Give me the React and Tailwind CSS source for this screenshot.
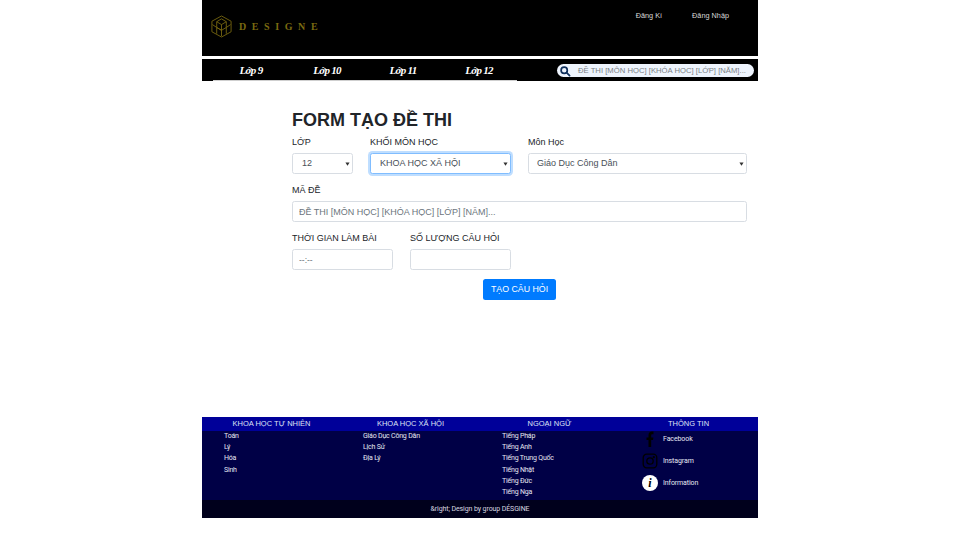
import React from "react";

const sans = "font-['Liberation_Sans',Arial,sans-serif]";
const foot = "font-['Roboto',sans-serif]";

function Logo() {
  return (
    <svg width="23" height="23" viewBox="0 0 24 24" fill="none" stroke="#7a6a10" strokeWidth="0.9">
      <path d="M12 1 L22 6.5 V17.5 L12 23 L2 17.5 V6.5 Z" />
      <path d="M12 4 L17 7 L12 10 L7 7 Z M7 7 V13 L12 16 V10 M17 7 V13 L12 16" />
      <path d="M7 13 L2.5 10 M17 13 L21.5 10 M7 13 L12 16 L12 22 M7 13 L7 19.5 M17 13 V19.5" />
    </svg>
  );
}

function Caret() {
  return (
    <svg className="absolute right-[3px] top-1/2 -translate-y-1/2 pointer-events-none" width="5" height="5" viewBox="0 0 6 5">
      <path d="M0.5 0.8 H5.5 L3 4.5 Z" fill="#333" />
    </svg>
  );
}

function Select({ value, width, focus, pad = "pl-[9px]" }) {
  return (
    <div className={`relative h-[21px] ${width}`}>
      <select
        defaultValue={value}
        className={`block appearance-none w-full h-full bg-white rounded-[2.5px] border ${pad} text-[9px] text-[#495057] outline-none ${
          focus ? "border-[#80bdff] shadow-[0_0_0_2px_rgba(0,123,255,0.25)]" : "border-[#d8dde3]"
        }`}
      >
        <option>{value}</option>
      </select>
      <Caret />
    </div>
  );
}

function Label({ children, className = "" }) {
  return <label className={`block text-[9px] leading-[14px] text-[#212529] ${className}`}>{children}</label>;
}

function FootList({ items }) {
  return (
    <div className="min-w-0">
      <ul className="pl-[22px]">
        {items.map((t) => (
          <li key={t} className="h-[11.2px] leading-[11px] text-[7px] tracking-[-0.2px] text-[#e6e8f2] whitespace-nowrap">{t}</li>
        ))}
      </ul>
    </div>
  );
}

export default function App() {
  return (
    <div className={`w-[960px] h-[539px] bg-white overflow-hidden ${sans}`}>
      <div className="w-[556px] ml-[202px]">
        <header className="h-[56px] bg-black flex justify-between items-start">
          <div className="flex items-center pl-[8px] pt-[15px] gap-[6px]">
            <Logo />
            <span className="font-['Liberation_Serif',serif] font-bold text-[10px] tracking-[5.6px] text-[#7a6a10]">DESIGNE</span>
          </div>
          <div className="flex gap-[30px] pr-[29px] pt-[10px] text-[7.3px] leading-[11px] text-[#d8d8d8]">
            <a>Đăng Kí</a>
            <a>Đăng Nhập</a>
          </div>
        </header>
        <nav className="mt-[3px] h-[22px] bg-black flex justify-between pl-[11px] pr-[4px]">
          <div className="flex w-[304px] h-[22px] border-b border-[#cfcfcf]">
            {["Lớp 9", "Lớp 10", "Lớp 11", "Lớp 12"].map((t) => (
              <a key={t} className="w-[76px] text-center font-['Liberation_Serif',serif] font-bold italic text-[11px] tracking-[-0.7px] leading-[22px] text-white">{t}</a>
            ))}
          </div>
          <div className="mt-[5px] w-[197px] h-[13px] rounded-full bg-[#eef4fd] flex items-center pl-[2px] pr-[8px] gap-[7px] overflow-hidden">
            <svg width="12" height="12" viewBox="0 0 12 12" fill="none" stroke="#10305c" strokeWidth="1.7" className="shrink-0">
              <circle cx="5.2" cy="5.2" r="3.1" />
              <path d="M7.6 7.6 L10.6 10.6" strokeLinecap="round" />
            </svg>
            <span className="text-[7.7px] text-[#7a7f85] whitespace-nowrap">ĐỀ THI [MÔN HỌC] [KHÓA HỌC] [LỚP] [NĂM]...</span>
          </div>
        </nav>

        <main className="h-[336px] pl-[90px] pr-[11px] pt-[28px]">
          <h1 className="text-[18px] leading-[22px] font-bold text-[#212529]">FORM TẠO ĐỀ THI</h1>
          <div className="flex gap-[17px] mt-[4px]">
            <div>
              <Label className="mb-[4px]">LỚP</Label>
              <Select value="12" width="w-[61px]" />
            </div>
            <div>
              <Label className="mb-[4px]">KHỐI MÔN HỌC</Label>
              <Select value="KHOA HỌC XÃ HỘI" width="w-[141px]" focus />
            </div>
            <div>
              <Label className="mb-[4px]">Môn Học</Label>
              <Select value="Giáo Dục Công Dân" width="w-[219px]" pad="pl-[8px]" />
            </div>
          </div>
          <Label className="mt-[9px] mb-[4px]">MÃ ĐỀ</Label>
          <input
            placeholder="ĐỀ THI [MÔN HỌC] [KHÓA HỌC] [LỚP] [NĂM]..."
            className="block w-[455px] h-[21px] rounded-[2.5px] border border-[#d8dde3] px-[6px] text-[9px] outline-none placeholder:text-[#6c757d]"
          />
          <div className="flex gap-[17px] mt-[9px]">
            <div>
              <Label className="mb-[4px]">THỜI GIAN LÀM BÀI</Label>
              <input placeholder="--:--" className="block w-[101px] h-[21px] rounded-[2.5px] border border-[#d8dde3] px-[6px] text-[8.5px] outline-none placeholder:text-[#6c757d]" />
            </div>
            <div>
              <Label className="mb-[4px]">SỐ LƯỢNG CÂU HỎI</Label>
              <input className="block w-[101px] h-[21px] rounded-[2.5px] border border-[#d8dde3] px-[6px] text-[8.5px] outline-none" />
            </div>
          </div>
          <div className="flex justify-center mt-[9px]">
            <button className="w-[73px] h-[21px] rounded-[2.5px] bg-[#007bff] text-white text-[8.8px]">TẠO CÂU HỎI</button>
          </div>
        </main>

        <footer>
          <div className="h-[14px] bg-[#000099] grid grid-cols-4 text-[7.5px] leading-[14px] text-[#dfe3f5] text-center">
            {["KHOA HỌC TỰ NHIÊN", "KHOA HỌC XÃ HỘI", "NGOẠI NGỮ", "THÔNG TIN"].map((t) => (
              <div key={t}>{t}</div>
            ))}
          </div>
          <div className={`h-[69px] bg-[#000046] grid grid-cols-4 ${foot}`}>
            <FootList items={["Toán", "Lý", "Hóa", "Sinh"]} />
            <FootList items={["Giáo Dục Công Dân", "Lịch Sử", "Địa Lý"]} />
            <FootList items={["Tiếng Pháp", "Tiếng Anh", "Tiếng Trung Quốc", "Tiếng Nhật", "Tiếng Đức", "Tiếng Nga"]} />
            <div className="min-w-0 pl-[23px] flex flex-col gap-[6px]">
              <div className="h-[16px] flex items-center gap-[5px]">
                <svg width="16" height="16" viewBox="0 0 16 16" className="shrink-0">
                  <path d="M6.5 16 V9 H4.5 V6.4 H6.5 V4.2 C6.5 1.8 7.9 0.6 9.8 0.6 H11.5 V3.2 H10.3 C9.5 3.2 9.2 3.6 9.2 4.4 V6.4 H11.4 L11 9 H9.2 V16 Z" fill="#000" />
                </svg>
                <span className="text-[7px] tracking-[-0.1px] text-[#e6e8f2]">Facebook</span>
              </div>
              <div className="h-[16px] flex items-center gap-[5px]">
                <svg width="16" height="16" viewBox="0 0 16 16" fill="none" stroke="#000" strokeWidth="1.3" className="shrink-0">
                  <rect x="1.2" y="1.2" width="13.6" height="13.6" rx="3.5" />
                  <circle cx="8" cy="8" r="3.2" />
                  <circle cx="11.8" cy="4.2" r="0.5" fill="#000" />
                </svg>
                <span className="text-[7px] tracking-[-0.1px] text-[#e6e8f2]">Instagram</span>
              </div>
              <div className="h-[16px] flex items-center gap-[5px]">
                <span className="shrink-0 w-[16px] h-[16px] rounded-full bg-white text-black text-center font-['Liberation_Serif',serif] font-bold italic text-[12px] leading-[16px]">i</span>
                <span className="text-[7px] tracking-[-0.1px] text-[#e6e8f2]">Information</span>
              </div>
            </div>
          </div>
          <div className={`h-[18px] bg-[#00001c] text-center text-[7px] tracking-[-0.1px] leading-[18px] text-[#d8d8e0] ${foot}`}>&amp;right; Design by group DÉSGINE</div>
        </footer>
      </div>
    </div>
  );
}
